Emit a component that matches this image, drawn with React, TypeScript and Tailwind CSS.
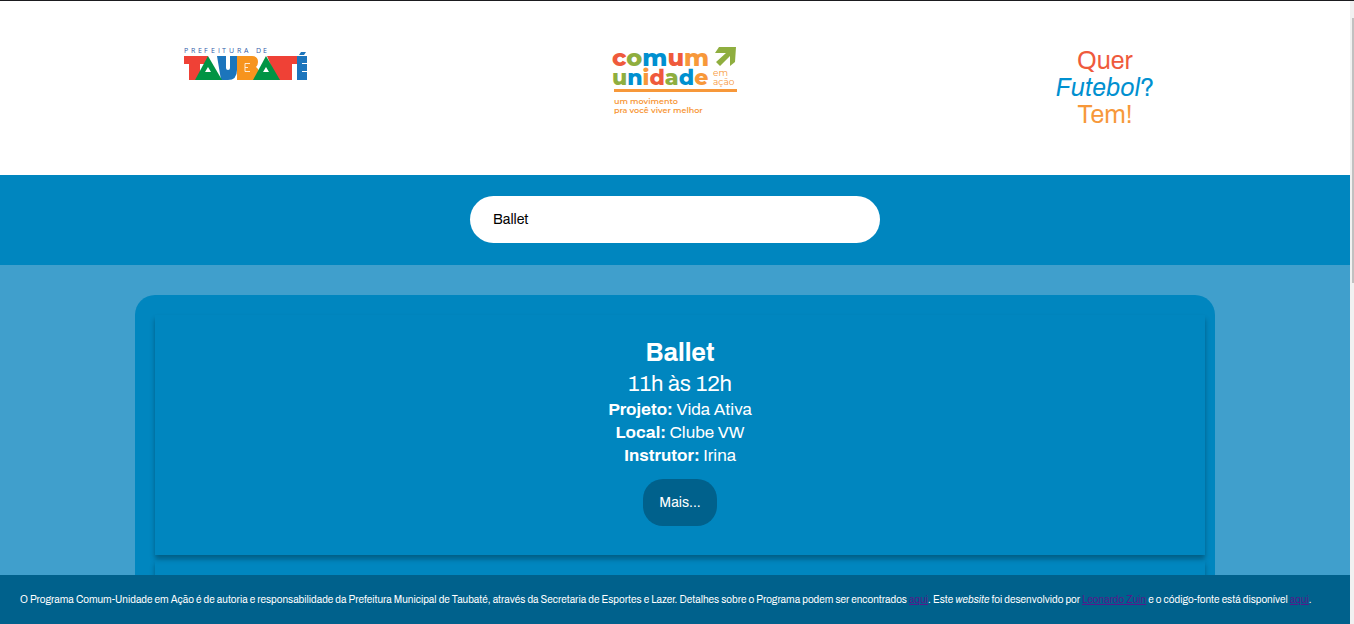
const activities = [
  { id: 1, name: "Ballet", time: "11h às 12h", project: "Vida Ativa", place: "Clube VW", teacher: "Irina" },
  { id: 2, name: "Ballet", time: "14h às 15h", project: "Vida Ativa", place: "Clube VW", teacher: "Irina" },
];

function TaubateLogo() {
  return (
    <svg viewBox="0 0 124 36" className="h-9 w-[124px] overflow-visible" role="img" aria-label="Prefeitura de Taubaté">
      <text
        x="1 8 15 21 28 35 39 46 54 61 66 73 80"
        y="7"
        fontFamily="Open Sans, sans-serif"
        fontSize="7"
        fill="#2f5da8"
      >
        PREFEITURA DE
      </text>
      <path d="M1 10h24v8h-8v16H6V18H1z" fill="#ef4136" />
      <path d="M34 10h9v12q0 2 2 2t2-2V10h7v14q0 10-9 10h-7z" fill="#1c75bc" />
      <path d="M54 10h15q6 0 6 6 0 3-2 5 3 2 3 6 0 7-7 7H54z" fill="#f7941e" />
      <path d="M67 17.500h-5v8h5M62 21.500h3" fill="none" stroke="#fff" strokeOpacity="0.8" strokeWidth="1" />
      <path d="M84 10h30v8h-5v16H94z" fill="#ef4136" />
      <path d="M12 34 25 10l14 24z" fill="#009444" />
      <path d="m25 21 3 5h-6z" fill="#fff" />
      <path d="M70 34 83 10l14 24z" fill="#009444" />
      <path d="m83 21 3 5h-6z" fill="#fff" />
      <path d="M114 10h10v24h-10zM118 6h5l-2 3h-5z" fill="#1c75bc" />
      <path d="M119 17.500h5M119 25.500h5" stroke="#fff" strokeWidth="1" />
    </svg>
  );
}

function ComumLogo() {
  return (
    <svg viewBox="0 0 126 72" className="h-[72px] w-[126px] overflow-visible" role="img" aria-label="Comum Unidade em Ação">
      <g fontFamily="Montserrat, Inter, sans-serif" fontWeight="800">
        <text x="0" y="20" fontSize="24">
          <tspan fill="#ef5a3c">c</tspan><tspan fill="#8fae3f">o</tspan><tspan fill="#0090d0">m</tspan><tspan fill="#ef5a3c">u</tspan><tspan fill="#f7983a">m</tspan>
        </text>
        <text x="0" y="39" fontSize="22">
          <tspan fill="#8fae3f">u</tspan><tspan fill="#0090d0">n</tspan><tspan fill="#f7983a">i</tspan><tspan fill="#ef5a3c">d</tspan><tspan fill="#8fae3f">a</tspan><tspan fill="#0090d0">d</tspan><tspan fill="#f7983a">e</tspan>
        </text>
      </g>
      <path d="M107 1h17l-1 15-5 4V10l-10 10-4-4 10-9h-11z" fill="#8fae3f" />
      <g fill="#f7983a" fontFamily="Montserrat, Inter, sans-serif">
        <text x="101" y="30" fontSize="9">em</text>
        <text x="101" y="39" fontSize="9">ação</text>
        <path d="M2 43h123v3H2z" />
        <text x="2" y="58" fontSize="8" fontWeight="600">um movimento</text>
        <text x="2" y="67" fontSize="8" fontWeight="600">pra você viver melhor</text>
      </g>
    </svg>
  );
}

export default function App() {
  return (
    <div className="flex h-screen overflow-hidden border-t border-[#1b1b1f] bg-white font-['Archivo','Liberation_Sans',Arial,sans-serif]">
      <div className="flex min-w-0 flex-1 flex-col">
        <header className="grid h-[174px] shrink-0 grid-cols-3 items-start justify-items-center px-[30px] pt-[45px]">
          <TaubateLogo />
          <ComumLogo />
          <h1 className="pt-px text-center text-[25px] leading-[27px] text-[#ef5a3c]">
            Quer
            <br />
            <span className="text-[#0090d0]"><em>Futebol</em>?</span>
            <br />
            <span className="text-[#f7983a]">Tem!</span>
          </h1>
        </header>

        <search className="flex h-[90px] shrink-0 items-start justify-center bg-[#0086bf] pt-[21px]">
          <input
            type="text"
            aria-label="Buscar atividade"
            defaultValue="Ballet"
            className="h-[47px] w-[410px] rounded-full bg-white px-[23px] text-sm text-black outline-none"
          />
        </search>

        <main className="min-h-0 flex-1 overflow-hidden bg-[#409fcc] pt-[30px]">
          <div className="mx-auto flex w-4/5 flex-col gap-[5px] rounded-[20px] bg-[#0086bf] py-5 pr-2.5 pl-5 text-white">
            {activities.map((a) => (
              <article key={a.id} className="flex h-60 flex-col items-center pt-[21px] text-center shadow-[0_4px_5px_0_rgba(0,0,0,0.3)]">
                <h2 className="text-[25px] leading-[34px] font-bold">{a.name}</h2>
                <p className="text-[22px] leading-7">{a.time}</p>
                <p className="text-[17px] leading-[23px]"><strong>Projeto:</strong> {a.project}</p>
                <p className="text-[17px] leading-[23px]"><strong>Local:</strong> {a.place}</p>
                <p className="text-[17px] leading-[23px]"><strong>Instrutor:</strong> {a.teacher}</p>
                <button type="button" className="mt-3 h-[47px] rounded-[20px] bg-[#00618c] px-4 text-sm">
                  Mais...
                </button>
              </article>
            ))}
          </div>
        </main>

        <footer className="flex h-[49px] shrink-0 items-center bg-[#00618c] px-5 text-[10px] text-white">
          <p className="whitespace-nowrap">
            O Programa Comum-Unidade em Ação é de autoria e responsabilidade da Prefeitura Municipal de Taubaté, através da Secretaria de Esportes e Lazer. Detalhes sobre o Programa podem ser encontrados{" "}
            <a href="#programa" className="text-[#551a8b] underline">aqui</a>. Este <em>website</em> foi desenvolvido por{" "}
            <a href="#autor" className="text-[#551a8b] underline">Leonardo Zuin</a> e o código-fonte está disponível{" "}
            <a href="#codigo" className="text-[#551a8b] underline">aqui</a>.
          </p>
        </footer>
      </div>
      <div aria-hidden="true" className="flex w-1 shrink-0 justify-end bg-[#f1f1f1] pt-[17px]">
        <div className="h-[265px] w-0.5 bg-[#c1c1c1]" />
      </div>
    </div>
  );
}
